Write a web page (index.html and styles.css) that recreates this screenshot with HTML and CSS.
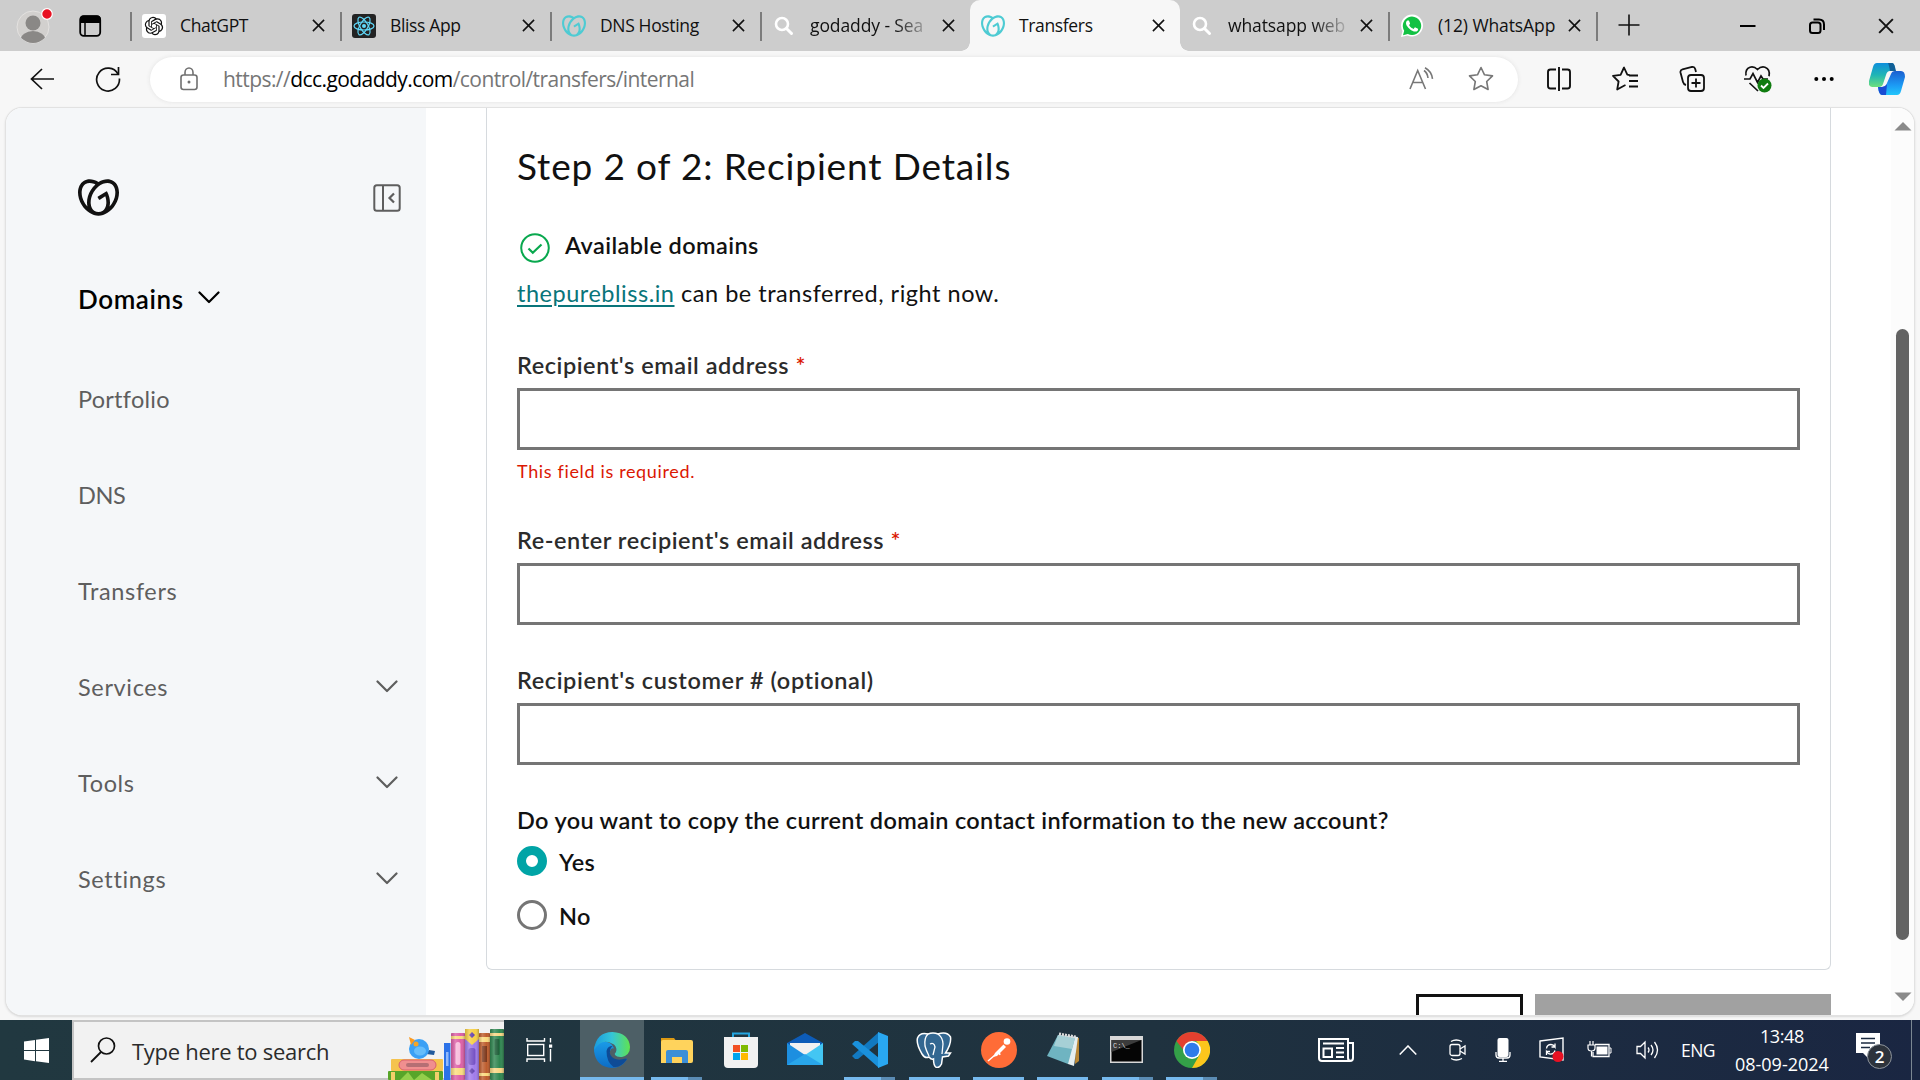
FILE: index.html
```html
<!DOCTYPE html>
<html lang="en">
<head>
<meta charset="utf-8">
<title>Transfers</title>
<link rel="stylesheet" href="styles.css">
</head>
<body>
<svg width="0" height="0" class="defs" aria-hidden="true">
  <symbol id="gd" viewBox="0 1.2 24 21.6"><path fill="currentColor" d="M20.702 2.29c-2.494-1.554-5.778-1.187-8.706.654C9.076 1.104 5.79.736 3.3 2.29c-3.941 2.463-4.42 8.806-1.07 14.167 2.47 3.954 6.333 6.269 9.77 6.226 3.439.043 7.301-2.273 9.771-6.226 3.347-5.361 2.872-11.704-1.069-14.167zM4.042 15.328a12.838 12.838 0 01-1.546-3.541 10.12 10.12 0 01-.336-3.338c.15-1.98.956-3.524 2.27-4.345 1.315-.822 3.052-.87 4.903-.137.281.113.556.24.825.382A15.11 15.11 0 007.5 7.54c-2.035 3.255-2.655 6.878-1.945 9.765a13.247 13.247 0 01-1.514-1.98zm17.465-3.541a12.866 12.866 0 01-1.547 3.54 13.25 13.25 0 01-1.513 1.984c.635-2.589.203-5.76-1.353-8.734a.39.39 0 00-.563-.153l-4.852 3.032a.397.397 0 00-.126.546l.712 1.139a.395.395 0 00.547.126l3.145-1.965c.101.306.203.606.28.916.296 1.086.41 2.214.335 3.337-.15 1.982-.956 3.525-2.27 4.347a4.437 4.437 0 01-2.25.65h-.101a4.432 4.432 0 01-2.25-.65c-1.314-.822-2.121-2.365-2.27-4.347-.074-1.123.039-2.251.335-3.337a13.212 13.212 0 014.05-6.482 10.148 10.148 0 012.849-1.765c1.845-.733 3.586-.685 4.9.137 1.316.822 2.122 2.365 2.271 4.345a10.146 10.146 0 01-.33 3.334z"/></symbol>
  <symbol id="x" viewBox="0 0 14 14"><path d="M1 1l12 12M13 1L1 13" stroke="#111" stroke-width="1.7" fill="none"/></symbol>
  <symbol id="mag" viewBox="0 0 24 24"><circle cx="10" cy="10" r="6" fill="none" stroke="#fff" stroke-width="2.6"/><path d="M14.5 14.5l5 5" stroke="#fff" stroke-width="3" stroke-linecap="round"/></symbol>
  <symbol id="chev" viewBox="0 0 22 13"><path d="M1.5 1.5L11 11l9.500-9.500" fill="none" stroke="currentColor" stroke-width="2.2" stroke-linecap="round" stroke-linejoin="round"/></symbol>
</svg>

<header class="tabstrip">
  <div class="profile">
    <svg width="38" height="40" viewBox="0 0 38 40"><clipPath id="av"><circle cx="17" cy="22" r="16"/></clipPath><circle cx="17" cy="22" r="16" fill="#d2d0ce" stroke="#e4e2e0"/><g clip-path="url(#av)" fill="#8a8886"><circle cx="17" cy="18" r="7.500"/><ellipse cx="17" cy="35" rx="12.500" ry="9"/></g><circle cx="31" cy="9" r="5.300" fill="#e81123" stroke="#fff" stroke-width="1.200"/></svg>
  </div>
  <svg class="workspace" width="24" height="22" viewBox="0 0 24 22"><rect x="1.200" y="1.200" width="20" height="19.600" rx="3.500" fill="none" stroke="#000" stroke-width="1.800"/><path d="M1 8V4q0-3.500 3.500-3.500H18q3.800 0 3.800 3.500v4z"/><path d="M6 8v13" stroke="#000" stroke-width="1.500"/></svg>
  <nav class="tabs">
    <div class="tab sep"><svg class="fav" viewBox="0 0 24 24"><rect width="24" height="24" rx="3" fill="#fff"/><path transform="translate(2.800 2.800) scale(.765)" fill="#111" d="M22.282 9.821a5.985 5.985 0 0 0-.516-4.911 6.046 6.046 0 0 0-6.510-2.900A6.065 6.065 0 0 0 4.981 4.182a5.985 5.985 0 0 0-3.998 2.900 6.046 6.046 0 0 0 .743 7.097 5.980 5.980 0 0 0 .511 4.911 6.051 6.051 0 0 0 6.515 2.900A5.985 5.985 0 0 0 13.260 24a6.056 6.056 0 0 0 5.772-4.206 5.989 5.989 0 0 0 3.998-2.900 6.056 6.056 0 0 0-.748-7.073zm-9.022 12.608a4.476 4.476 0 0 1-2.876-1.041l.142-.080 4.778-2.758a.795.795 0 0 0 .393-.681v-6.737l2.020 1.169a.071.071 0 0 1 .038.052v5.583a4.504 4.504 0 0 1-4.495 4.494zm-9.661-4.125a4.471 4.471 0 0 1-.535-3.014l.142.085 4.783 2.758a.771.771 0 0 0 .781 0l5.843-3.369v2.332a.080.080 0 0 1-.033.062L9.740 19.950a4.499 4.499 0 0 1-6.141-1.646zM2.341 7.896a4.485 4.485 0 0 1 2.366-1.973V11.600a.766.766 0 0 0 .388.677l5.814 3.354-2.020 1.169a.076.076 0 0 1-.071 0l-4.830-2.787A4.504 4.504 0 0 1 2.341 7.872zm16.596 3.856L13.104 8.364 15.119 7.200a.076.076 0 0 1 .071 0l4.830 2.791a4.494 4.494 0 0 1-.677 8.104v-5.677a.790.790 0 0 0-.407-.667zm2.011-3.023l-.142-.085-4.774-2.782a.776.776 0 0 0-.785 0L9.409 9.230V6.897a.066.066 0 0 1 .028-.062l4.830-2.787a4.499 4.499 0 0 1 6.680 4.660zM8.307 12.863l-2.020-1.164a.080.080 0 0 1-.038-.057V6.074a4.499 4.499 0 0 1 7.376-3.454l-.142.081L8.704 5.459a.795.795 0 0 0-.393.681zm1.098-2.365l2.602-1.500 2.607 1.500v2.999l-2.597 1.500-2.607-1.500z"/></svg><span class="title">ChatGPT</span><svg class="close"><use href="#x"/></svg></div>
    <div class="tab sep"><svg class="fav" viewBox="0 0 24 24"><rect width="24" height="24" rx="3" fill="#232323"/><g fill="none" stroke="#61dafb" stroke-width="1.200"><ellipse cx="12" cy="12" rx="10" ry="4"/><ellipse cx="12" cy="12" rx="10" ry="4" transform="rotate(60 12 12)"/><ellipse cx="12" cy="12" rx="10" ry="4" transform="rotate(120 12 12)"/></g><circle cx="12" cy="12" r="2" fill="#61dafb"/></svg><span class="title">Bliss App</span><svg class="close"><use href="#x"/></svg></div>
    <div class="tab sep"><svg class="fav teal"><use href="#gd"/></svg><span class="title">DNS Hosting</span><svg class="close"><use href="#x"/></svg></div>
    <div class="tab sep"><svg class="fav"><use href="#mag"/></svg><span class="title fade">godaddy - Sea</span><svg class="close"><use href="#x"/></svg></div>
    <div class="tab active"><svg class="fav teal"><use href="#gd"/></svg><span class="title">Transfers</span><svg class="close"><use href="#x"/></svg></div>
    <div class="tab narrow"><svg class="fav"><use href="#mag"/></svg><span class="title fade">whatsapp web</span><svg class="close"><use href="#x"/></svg></div>
    <div class="tab sep narrow"><svg class="fav" viewBox="0 0 24 24"><path d="M1 23l1.500-6A11 11 0 1 1 7.500 21.500z" fill="#fff"/><path d="M3 21.200l1.200-4.500A9.200 9.200 0 1 1 7.800 20z" fill="#12c143"/><path fill="#fff" d="M17.472 14.382c-.297-.149-1.758-.867-2.030-.967-.273-.099-.471-.148-.670.150-.197.297-.767.966-.940 1.164-.173.199-.347.223-.644.075-.297-.150-1.255-.463-2.390-1.475-.883-.788-1.480-1.761-1.653-2.059-.173-.297-.018-.458.130-.606.134-.133.298-.347.446-.520.149-.174.198-.298.298-.497.099-.198.050-.371-.025-.520-.075-.149-.669-1.612-.916-2.207-.242-.579-.487-.500-.669-.510-.173-.008-.371-.010-.570-.010-.198 0-.520.074-.792.372-.272.297-1.040 1.016-1.040 2.479 0 1.462 1.065 2.875 1.213 3.074.149.198 2.096 3.200 5.077 4.487.709.306 1.262.489 1.694.625.712.227 1.360.195 1.871.118.571-.085 1.758-.719 2.006-1.413.248-.694.248-1.289.173-1.413-.074-.124-.272-.198-.570-.347z"/></svg><span class="title wide">(12) WhatsApp</span><svg class="close"><use href="#x"/></svg></div>
    <div class="newtab"><svg width="22" height="22" viewBox="0 0 22 22"><path d="M11 .5v21M.5 11h21" stroke="#111" stroke-width="1.600"/></svg></div>
  </nav>
  <div class="winctl">
    <svg width="16" height="16" viewBox="0 0 16 16"><path d="M0 8h15.500" stroke="#000" stroke-width="2"/></svg>
    <svg width="16" height="16" viewBox="0 0 16 16"><rect x="1" y="4.500" width="10.500" height="10.500" rx="2.500" fill="none" stroke="#000" stroke-width="2"/><path d="M4.500 1.500H10q5 0 5 5V12" fill="none" stroke="#000" stroke-width="2"/></svg>
    <svg width="16" height="16" viewBox="0 0 14 14"><use href="#x"/></svg>
  </div>
</header>

<div class="toolbar">
  <svg width="24" height="22" viewBox="0 0 24 22"><path d="M12 1L1.500 11 12 21M1.500 11H24" fill="none" stroke="#111" stroke-width="1.700"/></svg>
  <svg class="reload" width="26" height="26" viewBox="0 0 26 26"><path d="M23 8A11.400 11.400 0 1 0 24.400 12.500" fill="none" stroke="#111" stroke-width="1.700"/><path d="M23.500 1v7.500H16" fill="none" stroke="#111" stroke-width="1.700"/></svg>
  <div class="urlbar">
    <svg width="18" height="24" viewBox="0 0 18 24"><rect x="1" y="8" width="16" height="14.500" rx="2.500" fill="none" stroke="#707070" stroke-width="1.600"/><path d="M5 8V5.500a4 4.500 0 0 1 8 0V8" fill="none" stroke="#707070" stroke-width="1.600"/><circle cx="9" cy="15" r="1.500" fill="#707070"/></svg>
    <span class="url">https://<b>dcc.godaddy.com</b>/control/transfers/internal</span>
    <svg class="aloud" width="26" height="24" viewBox="0 0 26 24"><g fill="none" stroke="#777" stroke-width="1.600"><path d="M1 22L8.700 3.500 16.500 22M4 15.500h9.500M15 3.500q3.500 2.500 4 7.500M16 .8q6.500 3.500 7.500 11"/></g></svg>
    <svg width="26" height="26" viewBox="0 0 26 26"><path d="M13 1.500l3.500 7.300 8 1.100-5.800 5.600 1.400 8L13 19.700l-7.100 3.800 1.400-8L1.500 9.900l8-1.100z" fill="none" stroke="#777" stroke-width="1.600" stroke-linejoin="round"/></svg>
  </div>
  <div class="actions">
    <svg width="26" height="26" viewBox="0 0 26 26"><g fill="none" stroke="#111" stroke-width="1.900"><path d="M10 3.500H4.500Q2 3.500 2 6v14q0 2.500 2.500 2.500H10M16 3.500h5.500Q24 3.500 24 6v14q0 2.500-2.500 2.500H16M13 1v24"/></g></svg>
    <svg width="26" height="26" viewBox="0 0 26 26"><g fill="none" stroke="#111" stroke-width="1.800" stroke-linejoin="round"><path d="M17.500 9l-2.200-.300L12 1.500 8.600 8.800l-7.600 1.100 5.600 5.600-1.400 8 6.800-3.800 1.500-.700M17 9.500h9M17 15h9M17 20.500h9"/></g></svg>
    <svg width="26" height="26" viewBox="0 0 26 26"><g fill="none" stroke="#111" stroke-width="1.800"><rect x="9" y="9" width="16" height="16" rx="3"/><path d="M17 12.500v9M12.500 17h9M7 19q-2.300-.5-3-3L1.500 6.500Q1 4 3.500 3.300L13 1q2.500-.5 3.200 2l.800 3"/></g></svg>
    <svg width="28" height="28" viewBox="0 0 28 28"><g fill="none" stroke="#111" stroke-width="1.700"><path d="M2 10.500Q1 4 6 2.200q4-1.200 7.500 2.300Q17 1 21 2.200q5.500 2 4 9M0 14h6l3-5.500 4.500 9L17 11l2 3h5M5.500 18l8.500 8"/></g><circle cx="20.500" cy="20.500" r="7" fill="#107c10"/><path d="M17 20.500l2.500 2.500 4.500-4.500" fill="none" stroke="#fff" stroke-width="1.800"/></svg>
    <svg width="20" height="6" viewBox="0 0 20 6"><circle cx="2.300" cy="3" r="2"/><circle cx="10" cy="3" r="2"/><circle cx="17.700" cy="3" r="2"/></svg>
  </div>
  <svg class="copilot" width="36" height="34" viewBox="0 0 36 34"><defs><linearGradient id="c1" x1="0" y1="0" x2="0" y2="1"><stop offset="0" stop-color="#0f8fdc"/><stop offset=".5" stop-color="#1fb5b5"/><stop offset="1" stop-color="#6ddf7d"/></linearGradient><linearGradient id="c2" x1="0" y1="0" x2="0" y2="1"><stop offset="0" stop-color="#1b5fd0"/><stop offset=".6" stop-color="#1c9bf5"/><stop offset="1" stop-color="#22c6fb"/></linearGradient></defs><path d="M8 1h15q3 0 3 8h-5q-3 0-4 4l-3 9q-1 3-4 3H3q-4 0-3-6L4 5q1-4 4-4z" fill="url(#c1)"/><path d="M19 1h4q2 0 3 4l1 4h-6q-1-6-2-8z" fill="#105f96"/><path d="M28 33H13q-3 0-4-8h4q4 0 5-4l4-9q1-3 4-3h6q4 0 4 6l-4 14q-1 4-4 4z" fill="url(#c2)"/><path d="M17 33h-4q-3 0-4-8h4q3 0 5-3z" fill="#194cd3"/></svg>
</div>

<div class="frame">
<div class="page">
  <aside class="sidebar">
    <div class="brand">
      <svg class="logo" width="41" height="37"><use href="#gd"/></svg>
      <svg width="28" height="28" viewBox="0 0 28 28"><g fill="none" stroke="#5e5e5e" stroke-width="2"><rect x="1.300" y="1.300" width="25.400" height="25.400" rx="2.500"/><path d="M10 1v26"/><path d="M21 9.500L16.500 14l4.500 4.500" stroke-width="2.200"/></g></svg>
    </div>
    <div class="product"><span>Domains</span><svg width="22" height="13"><use href="#chev"/></svg></div>
    <nav class="menu">
      <a><span>Portfolio</span></a>
      <a><span class="tight">DNS</span></a>
      <a><span class="loose">Transfers</span></a>
      <a><span class="loose">Services</span><svg><use href="#chev"/></svg></a>
      <a><span class="loose">Tools</span><svg><use href="#chev"/></svg></a>
      <a><span class="loose">Settings</span><svg><use href="#chev"/></svg></a>
    </nav>
  </aside>
  <main class="main">
    <section class="card">
      <h1>Step 2 of 2: Recipient Details</h1>
      <div class="avail"><svg width="30" height="30" viewBox="0 0 30 30"><circle cx="15" cy="15" r="13.800" fill="none" stroke="#09a84e" stroke-width="2"/><path d="M8.500 15.500l4.300 4.300 8.700-8.300" fill="none" stroke="#09a84e" stroke-width="2.200"/></svg><strong>Available domains</strong></div>
      <p class="sentence"><a>thepurebliss.in</a> can be transferred, right now.</p>
      <label class="label">Recipient's email address <i>*</i></label>
      <div class="input"></div>
      <p class="error">This field is required.</p>
      <label class="label second">Re-enter recipient's email address <i>*</i></label>
      <div class="input"></div>
      <label class="label third">Recipient's customer # (optional)</label>
      <div class="input"></div>
      <p class="question">Do you want to copy the current domain contact information to the new account?</p>
      <div class="radios">
        <div class="radio on"><span class="dot"></span><span>Yes</span></div>
        <div class="radio"><span class="dot"></span><span>No</span></div>
      </div>
    </section>
    <div class="buttons"><div class="btn outline"></div><div class="btn solid"></div></div>
  </main>
  <div class="scroll">
    <svg width="18" height="9" viewBox="0 0 18 9"><path d="M9 0l8.500 8.500H.5z" fill="#8a8a8a"/></svg>
    <div class="track"><div class="thumb"></div></div>
    <svg width="18" height="9" viewBox="0 0 18 9"><path d="M9 9L.5.500h17z" fill="#8a8a8a"/></svg>
  </div>
</div>
</div>

<footer class="taskbar">
  <div class="start"><svg width="25" height="25" viewBox="0 0 25 25"><path fill="#fff" d="M0 3.500l11-1.600V12H0zM12 1.800L25 0v12H12zM0 13h11v10.200L0 21.600zM12 13h13v12l-13-1.800z"/></svg></div>
  <div class="search">
    <svg width="26" height="26" viewBox="0 0 26 26"><circle cx="16.500" cy="9" r="8" fill="none" stroke="#111" stroke-width="1.700"/><path d="M11 15L1 25" stroke="#111" stroke-width="1.800"/></svg>
    <span>Type here to search</span>
    <svg class="books" width="116" height="51" viewBox="0 0 116 51">
      <defs><linearGradient id="bk" x1="0" x2="1"><stop offset="0" stop-color="#000" stop-opacity=".15"/><stop offset=".3" stop-color="#fff" stop-opacity=".2"/><stop offset=".7" stop-color="#fff" stop-opacity="0"/><stop offset="1" stop-color="#000" stop-opacity=".25"/></linearGradient></defs>
      <rect x="3" y="30" width="52" height="12" rx="1" fill="#f5c34e"/><rect x="11" y="31" width="37" height="10" rx="5" fill="#f08f8f" stroke="#d9606c"/><rect x="18" y="34" width="23" height="4" rx="2" fill="#b56f74"/>
      <rect x="0" y="42" width="55" height="9" rx="1" fill="#58a529"/><path d="M12 51l8-8 6 8 8-7 10 7z" fill="#93cf4b"/><path d="M3 43h4v8H3zM47 43h4v8h-4z" fill="#f4cf6b"/>
      <path d="M38 25l8 1 1-4-6-1z" fill="#215a9c"/><circle cx="31" cy="20" r="10" fill="#3ba0f5"/><path d="M21 8l6 3-4 5z" fill="#fb9a1f"/><circle cx="28" cy="15" r="2.500" fill="#f4a52a"/><ellipse cx="32" cy="22" rx="6" ry="4.500" fill="#66bdfb"/>
      <rect x="56" y="14" width="6.500" height="37" fill="#2c72e8"/><rect x="58" y="23" width="2.500" height="14" fill="#91b9fb"/>
      <rect x="63" y="4" width="14" height="47" rx="1" fill="#dc5fa6"/><path d="M63 7h14v3H63zM63 39h14v7H63z" fill="#fbdc7f"/><rect x="67.500" y="13" width="5" height="23" rx="2.500" fill="#f8bcdb"/>
      <rect x="77" y="0" width="14" height="51" rx="1" fill="#a07bea"/><path d="M77 0h14v10l-7 6-7-6z" fill="#f6cf45"/><path d="M84 3l3 3-3 3-3-3zM84 39l3 3-3 3-3-3z" fill="#6342ae"/><rect x="80.500" y="19" width="7" height="17" rx="2.500" fill="#7652c4"/>
      <rect x="91" y="4" width="11" height="47" rx="1" fill="#bd5c2c"/><path d="M91 8h11v5H91zM91 44h11v3H91z" fill="#fbd97d"/><rect x="94" y="17" width="5" height="16" fill="#7c371b"/>
      <rect x="102" y="0" width="14" height="51" rx="1" fill="#2f8650"/><path d="M102 4h14v3h-14zM102 39h14v5h-14z" fill="#f8d784"/><rect x="106.500" y="10" width="5" height="16" rx="1" fill="#195b34"/>
      <g fill="url(#bk)"><rect x="63" y="4" width="14" height="47"/><rect x="77" y="0" width="14" height="51"/><rect x="91" y="4" width="11" height="47"/><rect x="102" y="0" width="14" height="51"/></g>
    </svg>
  </div>
  <div class="taskview"><svg width="27" height="24" viewBox="0 0 27 24"><g fill="none" stroke="#fff" stroke-width="1.400"><rect x="1.700" y="6.500" width="16" height="11"/><path d="M1 0v3h17.500V0M1 24v-3h17.500v3M24.500 0v4.500M24.500 11v12.500"/></g><rect x="23" y="6.500" width="3.200" height="3.200" fill="#fff"/></svg></div>
  <div class="apps">
    <div class="app current"><svg viewBox="0 0 36 36"><defs><linearGradient id="e1" x1="0" x2="1"><stop offset="0" stop-color="#1a9bde"/><stop offset=".5" stop-color="#35c5d8"/><stop offset="1" stop-color="#5fe34f"/></linearGradient><linearGradient id="e2" x1="0" x2="0" y1="0" y2="1"><stop offset="0" stop-color="#1a9be8"/><stop offset="1" stop-color="#0d6cc4"/></linearGradient></defs><path d="M0 19Q0 9 9 9.500q9 0 11 7-3-1-4 3-1 7 6 9 5 1 10-2 1.500 0 .5 1.500Q27 36 18 36 2 35 0 19z" fill="url(#e2)"/><path d="M12.500 19q1-5 6-5-4 4-2 9 4 7 15.500 3.500 1.500 0 .5 1.500-6 8-13 7-7-5-7-16z" fill="#0e4b96"/><path d="M0 18Q2 0 18.500 0 35 1 36 15q0 8-8 10-5 .5-7-2-1-1 1-3 1.500-4-2-7.500Q8 5 0 18z" fill="url(#e1)"/></svg></div>
    <div class="app multi"><svg viewBox="0 0 36 36"><path d="M2 6h13l3 4H2z" fill="#dd9a13"/><path d="M2 10q0-2 2-2h28q2 0 2 2v19q0 2-2 2H2z" fill="#ffd35c"/><path d="M7 31V20q0-2 2-2h18q2 0 2 2v11h-6v-6H13v6z" fill="#3b8fd8"/></svg></div>
    <div class="app off"><svg viewBox="0 0 36 36"><path d="M10 6V1.500h16V6" fill="none" stroke="#24a5e0" stroke-width="2"/><path d="M1 5h34v27q0 4-4 4H5q-4 0-4-4z" fill="#f1f1f1"/><path d="M10 13h7v7h-7z" fill="#f25022"/><path d="M18 13h7v7h-7z" fill="#7fba00"/><path d="M10 21h7v7h-7z" fill="#00a4ef"/><path d="M18 21h7v7h-7z" fill="#ffb900"/></svg></div>
    <div class="app off"><svg viewBox="0 0 36 36"><path d="M0 11L18 1l18 10v10H0z" fill="#0d5cb8"/><path d="M3 11h30v10L18 27 3 21z" fill="#f1f1f1"/><path d="M0 11l18 12v10H0z" fill="#1d8fe0"/><path d="M36 11v22H18V23z" fill="#43c6f3"/><path d="M0 33l18-11 18 11z" fill="#29a6ea"/></svg></div>
    <div class="app multi"><svg viewBox="0 0 36 36"><path d="M27 10L6 27l-3 0-3-3L27 0z" fill="#1279c0"/><path d="M27 26L6 9H3L0 12l27 24z" fill="#1a91dc"/><path d="M26 0l10 4v28l-10 4z" fill="#29a7f1"/></svg></div>
    <div class="app"><svg viewBox="0 0 36 36"><path d="M6 22Q0 12 1.500 6 4 0 12 2q5-2 10 0 9-3 12.500 3 1 7-5 16h5l-2 3-6 1-1 7q-2 4-5 3.500-3-1-3-8.500-2 1-4.500-2-4 2-7-3z" fill="#336791" stroke="#fff" stroke-width="1.500"/><path d="M12 2q-4 4-3 12 1 4 4 10M22 2q5 4 5 10l-1 10M14 12q4-2 5 3l-2 8" fill="none" stroke="#fff" stroke-width="1.300"/></svg></div>
    <div class="app"><svg viewBox="0 0 36 36"><circle cx="18" cy="18" r="18" fill="#ff6c37"/><circle cx="26" cy="9.500" r="3.300" fill="#fff"/><path d="M22.500 12.500l2.500 2.500-9 9-4 1 2-4z" fill="#fff"/><path d="M7 29l7-6M18 20l1 3" stroke="#fff" stroke-width="1.500"/></svg></div>
    <div class="app"><svg viewBox="0 0 36 36"><path d="M31 5l3 1v23l-4 3z" fill="#b98735"/><path d="M14 3l19 2-4 29-6-2z" fill="#e5eef0"/><path d="M13 3l17 3-7 26L2 24z" fill="#6fb4c1"/><path d="M13 3l17 3-3 11-18-3z" fill="#a6d0d6"/><path d="M14 2l17 3" stroke="#ddd" stroke-width="3" stroke-dasharray="2 1"/></svg></div>
    <div class="app multi"><svg viewBox="0 0 36 36"><rect x="1" y="4" width="33" height="27" fill="#d8d8d8"/><rect x="2.500" y="8" width="30" height="21.500" fill="#050505"/><path d="M2.500 8h30L2.500 20z" fill="#3b3b3b"/><text x="4" y="15.500" class="cmd">C:\_</text></svg></div>
    <div class="app multi"><svg viewBox="0 0 36 36"><circle cx="18" cy="18" r="18" fill="#34a048"/><path d="M2.400 9A18 18 0 0 1 33.600 9H18q-7 1-8.500 9z" fill="#e3402f"/><path d="M33.600 9A18 18 0 0 1 18 36l8-14q2-7-4-13z" fill="#fcc61c"/><circle cx="18" cy="18" r="9" fill="#fff"/><circle cx="18" cy="18" r="7.300" fill="#2f7bea"/></svg></div>
  </div>
  <div class="tray">
    <svg class="news" width="36" height="24" viewBox="0 0 36 24"><g fill="none" stroke="#fff" stroke-width="2"><path d="M1 1h29v19q0 3 3 3H4q-3 0-3-3zM30 5h5v15q0 3-3 3"/><rect x="5.500" y="10.500" width="8.500" height="8.500"/><path d="M5 5.500h21M18 10h8M18 14.500h8M18 19h8"/></g></svg>
    <svg class="caret" width="18" height="10" viewBox="0 0 18 10"><path d="M.7 9.500L9 1l8.300 8.500" fill="none" stroke="#fff" stroke-width="1.500"/></svg>
    <svg class="cam" width="17" height="22" viewBox="0 0 17 22"><g fill="none" stroke="#fff" stroke-width="1.300"><rect x="1" y="5.500" width="10" height="11" rx="2"/><path d="M11 10l5-3v8l-5-3M2 2.500q5-3 11 0M2 19.500q5 3 11 0"/></g></svg>
    <svg class="mic" width="16" height="24" viewBox="0 0 16 24"><rect x="2.500" y="0" width="11" height="19" rx="2" fill="#fff"/><path d="M1 14v3q0 3 3 3h8q3 0 3-3v-3M8 20v3M4 23.300h8" fill="none" stroke="#fff" stroke-width="1.300"/></svg>
    <svg class="sync" width="25" height="25" viewBox="0 0 25 25"><path d="M1 4l23-3v22l-23-3z" fill="none" stroke="#fff" stroke-width="1.400"/><path d="M7.500 11.500q.5-4 4.500-4 2.500 0 4 2.500V6.500M16 10h-3.500M16 13.500q-1 4-5 3.500-2 0-3.500-2.500V18M7.500 14.500H11" fill="none" stroke="#fff" stroke-width="1.300"/><circle cx="19" cy="19.500" r="5.500" fill="#e81123"/></svg>
    <svg class="batt" width="25" height="18" viewBox="0 0 25 18"><path d="M8 3.500h14v12H6V11" fill="none" stroke="#fff" stroke-width="1.300"/><path d="M9.500 5.500h11v8h-11z" fill="#fff"/><path d="M22.500 7H24v5h-1.500" fill="none" stroke="#fff"/><path d="M1 4h7v3q0 3-3.500 3T1 7zM3 4V0M6 4V0M4.500 10v5.500" fill="none" stroke="#fff" stroke-width="1.200"/></svg>
    <svg class="vol" width="23" height="20" viewBox="0 0 23 20"><g fill="none" stroke="#fff" stroke-width="1.300"><path d="M1 6.500h3.500L9 2v16l-4.500-4.500H1zM12 7.500q2 2.500 0 5M15 5q4 5 0 10M18.500 2q6 8 0 16"/></g></svg>
    <span class="lang">ENG</span>
    <div class="clock"><span>13:48</span><span>08-09-2024</span></div>
    <svg class="notif" width="37" height="38" viewBox="0 0 37 38"><path d="M0 0h24v20H12v5l-5-5H0z" fill="#fff"/><path d="M5 5.500h14M5 10h14M5 14.500h9" stroke="#1b2a40" stroke-width="1.500"/><circle cx="23.500" cy="23.500" r="12" fill="#2d333c" stroke="#8d949c" stroke-width="1"/><text x="23.500" y="29.500" class="badge">2</text></svg>
    <div class="peek"></div>
  </div>
</footer>
</body>
</html>
```
FILE: styles.css
```css
* { box-sizing: border-box; margin: 0; padding: 0; }
body { width: 1920px; height: 1080px; overflow: hidden; display: flex; flex-direction: column; background: #f7f7f7; font-family: "Open Sans", "Noto Sans", sans-serif; color: #111; }
svg { display: block; flex: none; }
.defs { position: absolute; }

/* Tab strip */
.tabstrip { height: 51px; flex: none; display: flex; align-items: center; background: #cdcdcd; }
.profile { width: 79px; padding-left: 16px; margin-top: -1px; }
.workspace { margin-right: 27px; }
.tabs { display: flex; height: 51px; flex: 1; }
.tab { width: 210px; display: flex; align-items: center; padding: 0 15px 0 10px; border-left: 2px solid transparent; position: relative; }
.tab.narrow { width: 208px; }
.tab.sep { border-image: linear-gradient(transparent 12px, #7c7c7c 12px, #7c7c7c 41px, transparent 41px) 0 0 0 2; }
.fav { width: 24px; height: 24px; }
.teal { color: #4ecbd3; }
.title { flex: 1; min-width: 0; margin: -1px 8px 0 14px; font-size: 17.5px; letter-spacing: -0.35px; white-space: nowrap; line-height: 30px; }
.title.wide { letter-spacing: -0.1px; }
.fade { mask-image: linear-gradient(90deg, #000 68%, transparent); letter-spacing: -0.1px; }
.close { width: 13px; height: 13px; }
.tab.active { background: #f7f7f7; border-radius: 10px 10px 0 0; padding-left: 9px; }
.tab.active::before, .tab.active::after { content: ""; position: absolute; bottom: 0; width: 9px; height: 9px; }
.tab.active::before { left: -11px; background: radial-gradient(circle at 0 0, transparent 8.5px, #f7f7f7 9px); }
.tab.active::after { right: -9px; background: radial-gradient(circle at 100% 0, transparent 8.5px, #f7f7f7 9px); }
.tab.active + .tab { padding-left: 8px; }
.newtab { display: flex; align-items: center; padding: 0 22px 2px 20px; border-left: 2px solid; border-image: linear-gradient(transparent 12px, #7c7c7c 12px, #7c7c7c 41px, transparent 41px) 0 0 0 2; }
.winctl { display: flex; gap: 53px; padding-right: 26px; }

/* Address toolbar */
.toolbar { height: 57px; flex: none; display: flex; align-items: center; padding: 0 15px 1px 30px; }
.reload { margin: 0 29px 0 41px; }
.urlbar { width: 1368px; height: 45px; border-radius: 23px; background: #fff; box-shadow: 0 0 4px #e2e2e2; display: flex; align-items: center; padding: 0 24px 0 30px; }
.url { flex: 1; margin: 0 0 0 25px; font-size: 21px; letter-spacing: -0.56px; color: #767676; }
.url b { font-weight: 400; color: #000; }
.aloud { margin-right: 33px; }
.actions { display: grid; grid-template-columns: repeat(5, 66.3px); place-items: center; margin-left: 8px; }
.copilot { margin-left: auto; }

/* Page frame */
.frame { height: 912px; flex: none; padding: 0 6px 6px; }
.page { height: 907px; display: flex; border-radius: 16px; overflow: hidden; background: #fff; box-shadow: 0 0 0 1px #e2e2e2, 0 1px 3px #bbb; font-family: Lato, "Open Sans", sans-serif; }

.sidebar { width: 420px; background: #f5f7f9; padding: 71px 25px 0 72px; }
.brand { display: flex; justify-content: space-between; align-items: center; height: 37px; color: #111; }
.product { display: flex; align-items: center; gap: 14px; height: 40px; margin-top: 63px; color: #000; font-size: 26px; font-weight: 600; letter-spacing: 0.6px; }
.product svg { margin-bottom: 3px; }
.menu { display: flex; flex-direction: column; margin-top: 32px; }
.menu a { height: 96px; display: flex; align-items: center; justify-content: space-between; padding-right: 3px; font-size: 23.5px; letter-spacing: 0.25px; color: #5e5e5e; }
.menu .loose { letter-spacing: 0.65px; }
.menu .tight { letter-spacing: -0.4px; }
.menu svg { width: 22px; height: 13px; margin-bottom: 2px; }

.main { flex: 1; padding-left: 60px; }
.card { width: 1345px; padding: 34px 30px 39px; border: 1px solid #d6dade; border-top: 0; border-radius: 0 0 6px 6px; font-size: 23.5px; letter-spacing: 0.4px; }
h1 { font-size: 37px; line-height: 48px; font-weight: 400; letter-spacing: 0.86px; }
.avail { display: flex; align-items: flex-start; margin-top: 39px; height: 32px; line-height: 32px; padding-left: 3px; gap: 15px; }
.avail svg { margin-top: 4px; }
strong, .question, .radio { font-weight: 600; }
.avail strong { letter-spacing: 0.4px; }
.sentence { margin-top: 16px; line-height: 32px; letter-spacing: 0.52px; }
.sentence a { color: #09757a; text-decoration: underline; text-underline-offset: 3px; text-decoration-thickness: 2px; }
.label { display: block; margin-top: 40px; line-height: 32px; font-weight: 600; color: #2b2b2b; letter-spacing: 0.55px; }
.label i { font-style: normal; color: #db1802; }
.input { height: 62px; margin-top: 7px; border: 3px solid #757575; }
.error { margin-top: 9px; font-size: 18px; line-height: 24px; letter-spacing: 0.65px; color: #db1802; }
.label.second { margin-top: 41px; }
.label.third { margin-top: 39px; letter-spacing: 0.6px; }
.question { margin-top: 39px; line-height: 32px; letter-spacing: 0.33px; white-space: nowrap; }
.radios { display: grid; gap: 24px; margin-top: 10px; }
.radio { display: flex; align-items: center; gap: 12px; height: 30px; line-height: 32px; }
.radio span:last-child { padding-top: 2px; }
.dot { width: 30px; height: 30px; border: 3px solid #757575; border-radius: 50%; }
.on .dot { border: 9px solid #00a4a6; }
.buttons { width: 1345px; display: flex; justify-content: flex-end; gap: 12px; margin-top: 24px; }
.btn { height: 60px; }
.btn.outline { width: 107px; border: 3px solid #111; }
.btn.solid { width: 296px; background: #a1a1a1; }

.scroll { width: 23px; margin-left: 2px; background: #fcfcfc; display: flex; flex-direction: column; align-items: center; padding: 14px 0 14px; }
.track { flex: 1; padding: 198px 0 0; }
.thumb { width: 13px; height: 611px; border-radius: 7px; background: #636363; }

/* Taskbar */
.taskbar { height: 60px; flex: none; display: flex; background: linear-gradient(90deg, #213840, #1f323f 60%, #1a2642); color: #fff; }
.start { width: 72px; padding: 18px 24px; }
.search { width: 432px; height: 60px; border: 2px solid #c4c4c4; border-right-width: 0; background: #f2f2f2; display: flex; align-items: center; padding-left: 16px; color: #2b2b2b; font-size: 22px; letter-spacing: -0.28px; }
.search span { margin-left: 16px; padding-top: 2px; flex: 1; }
.books { align-self: flex-end; margin-bottom: -2px; }
.taskview { width: 76px; padding: 18px 0 0 22px; }
.apps { display: flex; }
.app { width: 64.4px; height: 60px; display: grid; place-items: center; background: linear-gradient(#76b9ed, #76b9ed) center bottom / 51px 3px no-repeat; }
.app svg { width: 36px; height: 36px; }
.app.multi { background-image: linear-gradient(90deg, #76b9ed 37px, #5b8cb4 37px); }
.app.off { background: none; }
.app.current { background: linear-gradient(#76b9ed, #76b9ed) bottom / 100% 3px no-repeat, #4d5f66; }
.cmd { font: 7px "Liberation Mono", monospace; fill: #ddd; }
.tray { flex: 1; display: flex; align-items: center; padding-bottom: 1px; }
.news { margin-left: 94px; }
.caret { margin-left: 45px; }
.cam { margin-left: 32px; }
.mic { margin-left: 29px; }
.sync { margin-left: 28px; }
.batt { margin-left: 23px; }
.vol { margin-left: 24px; }
.lang { margin-left: 22px; width: 35px; font-size: 17.5px; letter-spacing: -0.5px; }
.clock { margin-left: 18px; width: 96px; display: flex; flex-direction: column; align-items: center; font-size: 18px; line-height: 28px; letter-spacing: 0; white-space: nowrap; }
.clock span:first-child { letter-spacing: -0.4px; }
.notif { margin: 5px 18px 0 26px; }
.badge { font: 600 17px "Open Sans", sans-serif; fill: #fff; text-anchor: middle; }
.peek { width: 1px; height: 60px; background: #7b8792; }
```
